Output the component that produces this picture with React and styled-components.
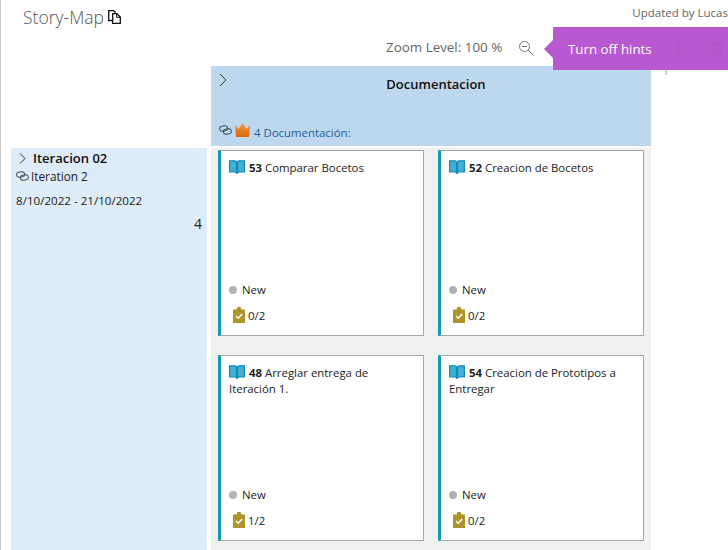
import styled, { createGlobalStyle } from "styled-components";

const cards = [
  { id: 53, title: "Comparar Bocetos", tasks: "0/2" },
  { id: 52, title: "Creacion de Bocetos", tasks: "0/2" },
  { id: 48, title: "Arreglar entrega de Iteración 1.", tasks: "1/2" },
  { id: 54, title: "Creacion de Prototipos a Entregar", tasks: "0/2" },
];

function Chevron({ big }) {
  const h = big ? 14 : 11;
  return (
    <svg width={big ? 8 : 7} height={h} viewBox={`0 0 ${big ? 8 : 7} ${h}`}>
      <path d={big ? "M1 1l6 6-6 6" : "M1 .5l5 5-5 5"} fill="none" stroke="#333" strokeWidth="1" />
    </svg>
  );
}

function LinkIcon() {
  return (
    <svg width="13" height="10" viewBox="0 0 13 10">
      <rect x=".6" y="1" width="8" height="5" rx="2.500" fill="none" stroke="#3a4a5a" transform="rotate(-8 4.500 3.500)" />
      <rect x="4.400" y="4" width="8" height="5" rx="2.500" fill="none" stroke="#3a4a5a" transform="rotate(-8 8.500 6.500)" />
    </svg>
  );
}

function CopyIcon() {
  return (
    <svg width="13" height="14" viewBox="0 0 13 14">
      <path d="M5 10.500H.7V.7h5l2 2" fill="none" stroke="#111" strokeWidth="1.300" />
      <path d="M4.700 3.700h4.200l3.400 3.400v6.200H4.700z" fill="#fff" stroke="#111" strokeWidth="1.300" />
      <path d="M8.600 3.700v3.600h3.700" fill="none" stroke="#111" />
    </svg>
  );
}

function MagnifierIcon() {
  return (
    <svg width="15" height="15" viewBox="0 0 15 15">
      <circle cx="5.500" cy="5.500" r="5" fill="none" stroke="#777" />
      <path d="M3 5.500h5M9 9l5.500 5.500" fill="none" stroke="#777" />
    </svg>
  );
}

function BookIcon() {
  return (
    <svg width="16" height="14" viewBox="0 0 16 14">
      <path d="M.6.8h5.200c1 0 1.700.6 1.700 1.400v10.600c-.3-.5-.9-.8-1.700-.8H.6z" fill="#45aed4" stroke="#0c8dbb" strokeWidth="1.200" />
      <path d="M15.400.8h-5.200c-1 0-1.700.6-1.700 1.400v10.600c.3-.5.9-.8 1.700-.8h5.200z" fill="#45aed4" stroke="#0c8dbb" strokeWidth="1.200" />
    </svg>
  );
}

function TaskIcon() {
  return (
    <svg width="12" height="16" viewBox="0 0 12 16">
      <path d="M0 2.500h3.500L4.500 0h3l1 2.500H12V16H0z" fill="#b0932a" />
      <path d="M3 9l2.200 2.200L9.200 7" fill="none" stroke="#fff" strokeWidth="1.500" />
    </svg>
  );
}

function CrownIcon() {
  return (
    <svg width="15" height="14" viewBox="0 0 15 14">
      <defs>
        <linearGradient id="crown" x1="0" y1="0" x2="0" y2="1">
          <stop offset="0" stopColor="#f2a03c" />
          <stop offset="1" stopColor="#dc6208" />
        </linearGradient>
      </defs>
      <path d="M0 2l3.500 4L7.500 0l4 6L15 2l-1 12H1z" fill="url(#crown)" />
    </svg>
  );
}

// icons of the toolbar that show faintly through the hint
function GhostIcons() {
  return (
    <Ghosts>
      <svg width="8" height="16" viewBox="0 0 8 16">
        <path d="M4 1v9M1 14h6M1 11h6" fill="none" stroke="#ac52c4" />
      </svg>
      <svg width="12" height="16" viewBox="0 0 12 16">
        <path d="M0 2h12M3 2v12M6 2v12M9 2v12" fill="none" stroke="#ac52c4" />
      </svg>
    </Ghosts>
  );
}

export default function App() {
  return (
    <Page>
      <GlobalStyle />
      <Header>
        <Title>Story-Map</Title>
        <CopyHolder>
          <CopyIcon />
        </CopyHolder>
        <Updated>Updated by Lucas</Updated>
      </Header>
      <Toolbar>
        <ZoomLabel>Zoom Level: 100 %</ZoomLabel>
        <MagnifierHolder>
          <MagnifierIcon />
        </MagnifierHolder>
      </Toolbar>
      <Hint>
        Turn off hints
        <GhostIcons />
      </Hint>
      <Board>
        <Corner />
        <ColumnHeader>
          <ColumnTop>
            <Chevron big />
            <ColumnTitle>Documentacion</ColumnTitle>
          </ColumnTop>
          <ColumnLink>
            <LinkHolder>
              <LinkIcon />
            </LinkHolder>
            <CrownHolder>
              <CrownIcon />
            </CrownHolder>
            <span>4 Documentación:</span>
          </ColumnLink>
        </ColumnHeader>
        <Iteration>
          <IterationTitle>
            <Chevron />
            <span>Iteracion 02</span>
          </IterationTitle>
          <IterationLink>
            <LinkIcon />
            Iteration 2
          </IterationLink>
          <Dates>8/10/2022 - 21/10/2022</Dates>
          <Count>4</Count>
        </Iteration>
        <Cards>
          {cards.map((card) => (
            <Card key={card.id}>
              <CardTitle>
                <BookIcon />
                <b>{card.id}</b> {card.title}
              </CardTitle>
              <CardState>
                <Dot />
                New
              </CardState>
              <CardTasks>
                <TaskIcon />
                {card.tasks}
              </CardTasks>
            </Card>
          ))}
        </Cards>
      </Board>
    </Page>
  );
}

const GlobalStyle = createGlobalStyle`
  html, body {
    margin: 0;
    padding: 0;
    background: #fff;
    overflow: hidden;
  }
`;

const Page = styled.div`
  position: relative;
  width: 727px;
  height: 550px;
  overflow: hidden;
  border-left: 1px solid #c8c8c8;
  font-family: "Open Sans", "Noto Sans", sans-serif;
  font-size: 11.4px;
  color: #222;
`;

const Header = styled.div`
  display: flex;
  align-items: center;
  height: 34px;
  padding-left: 22px;
`;

const Title = styled.div`
  margin-top: -1px;
  font-size: 17.500px;
  font-weight: 300;
  color: #555;
`;

const CopyHolder = styled.div`
  display: flex;
  margin-left: 4px;
`;

const Updated = styled.div`
  margin-left: auto;
  margin-top: -10px;
  font-size: 11.500px;
  color: #666;
  white-space: nowrap;
`;

const Toolbar = styled.div`
  display: flex;
  align-items: center;
  gap: 17px;
  height: 26px;
  margin-bottom: 6px;
  padding-left: 385px;
`;

const ZoomLabel = styled.div`
  font-size: 13.400px;
  color: #666;
`;

const MagnifierHolder = styled.div`
  display: flex;
  margin-top: 2px;
`;

const Hint = styled.div`
  position: absolute;
  top: 27px;
  left: 552px;
  width: 175px;
  height: 43px;
  box-sizing: border-box;
  padding: 0 5px 0 15px;
  display: flex;
  align-items: center;
  background: #b959d1;
  color: #fff;
  font-size: 13.300px;

  &::before {
    content: "";
    position: absolute;
    left: -9px;
    top: 13px;
    border-style: solid;
    border-width: 9px 9px 9px 0;
    border-color: transparent #b959d1 transparent transparent;
  }

  &::after {
    content: "";
    position: absolute;
    left: 112px;
    top: 43px;
    width: 2px;
    height: 5px;
    background: #d9c6e0;
  }
`;

const Ghosts = styled.div`
  display: flex;
  align-items: center;
  gap: 29px;
  margin-left: auto;
`;

const Board = styled.div`
  display: grid;
  grid-template-columns: 196px 440px;
  grid-template-rows: 80px 1fr;
  column-gap: 4px;
  row-gap: 2px;
  margin-left: 10px;
`;

const Corner = styled.div``;

const ColumnHeader = styled.div`
  display: flex;
  flex-direction: column;
  height: 80px;
  box-sizing: border-box;
  padding: 7px 6px 4px 8px;
  background: #bdd7ee;
`;

const ColumnTop = styled.div`
  display: flex;
  align-items: flex-start;
`;

const ColumnTitle = styled.div`
  flex: 1;
  margin-top: 2px;
  text-align: center;
  font-weight: 600;
  font-size: 13px;
  color: #111;
`;

const ColumnLink = styled.div`
  display: flex;
  align-items: center;
  gap: 3px;
  margin-top: auto;
  color: #1f5f9e;

  span {
    margin-left: 1px;
  }
`;

const LinkHolder = styled.div`
  display: flex;
  margin-bottom: 6px;
`;

const CrownHolder = styled.div`
  display: flex;
  margin-bottom: 5px;
`;

const Iteration = styled.div`
  height: 402px;
  box-sizing: border-box;
  padding: 1px 5px;
  background: #deebf8;
`;

const IterationTitle = styled.div`
  display: flex;
  align-items: center;
  gap: 7px;
  padding-left: 3px;
  font-size: 13px;
  font-weight: 600;
  color: #111;
`;

const IterationLink = styled.div`
  display: flex;
  align-items: center;
  gap: 2px;
  margin-top: 1px;
  font-size: 11.800px;
`;

const Dates = styled.div`
  margin-top: 9px;
  font-size: 11.600px;
`;

const Count = styled.div`
  margin-top: 6px;
  text-align: right;
  font-size: 14px;
`;

const Cards = styled.div`
  display: grid;
  grid-template-columns: 206px 206px;
  grid-auto-rows: 186px;
  column-gap: 14px;
  row-gap: 19px;
  height: 402px;
  box-sizing: border-box;
  padding: 2px 7px;
  background: #f0f0f0;
`;

const Card = styled.div`
  display: flex;
  flex-direction: column;
  box-sizing: border-box;
  padding: 9px 8px 12px 8px;
  background: #fff;
  border: 1px solid #a6a6a6;
  border-left: 3px solid #0f9bb8;
`;

const CardTitle = styled.div`
  line-height: 16px;

  svg {
    vertical-align: -2px;
    margin-right: 4px;
  }

  b {
    font-weight: 700;
  }
`;

const CardState = styled.div`
  display: flex;
  align-items: center;
  gap: 5px;
  margin-top: auto;
  margin-bottom: 10px;
`;

const Dot = styled.span`
  width: 8px;
  height: 8px;
  border-radius: 50%;
  background: #b2b2b2;
`;

const CardTasks = styled.div`
  display: flex;
  align-items: center;
  gap: 3px;
  padding-left: 4px;
`;
